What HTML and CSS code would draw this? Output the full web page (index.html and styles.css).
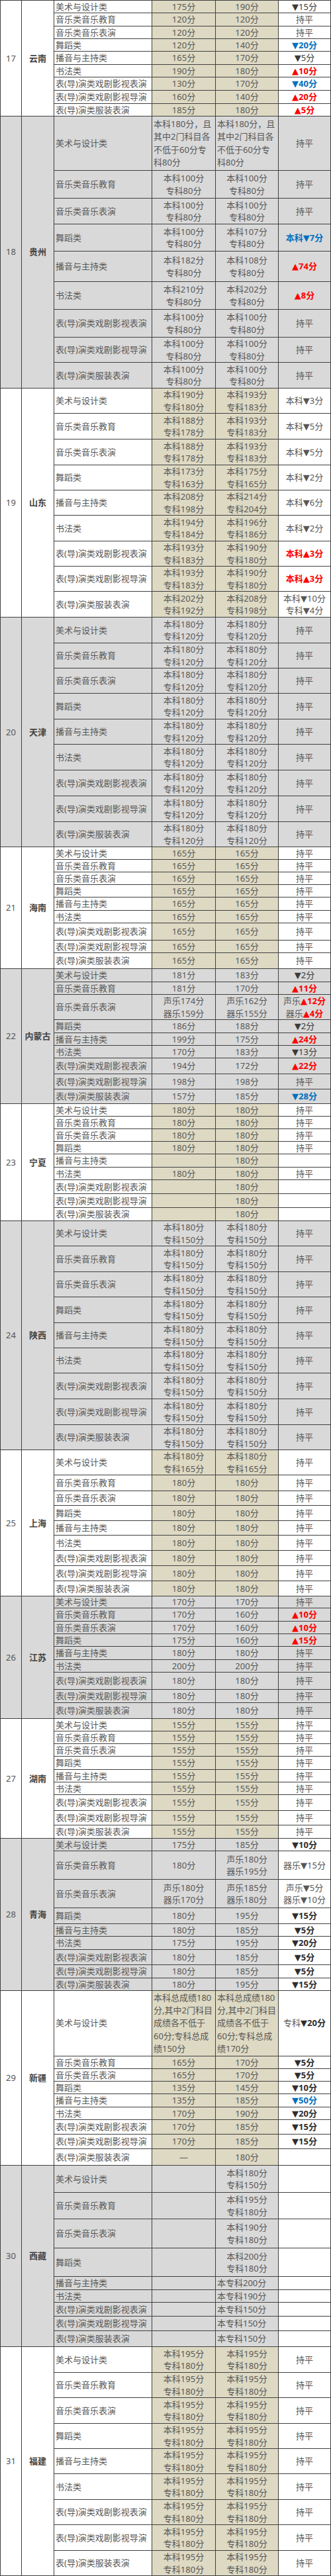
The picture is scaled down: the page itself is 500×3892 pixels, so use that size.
FILE: index.html
```html
<!DOCTYPE html>
<html lang="zh-CN">
<head>
<meta charset="utf-8">
<title>艺术类专业省控线对比</title>
<link rel="stylesheet" href="styles.css">
</head>
<body>
<table class="grid">
<colgroup><col class="w1"><col class="w2"><col class="w3"><col class="w4"><col class="w5"><col class="w6"></colgroup>

<tbody class="od">
<tr class="h19"><td rowspan="9" class="no">17</td><td rowspan="9" class="pv">云南</td><td class="n">美术与设计类</td><td class="s">175分</td><td class="s">190分</td><td class="c k">▼15分</td></tr>
<tr class="h20"><td class="n">音乐类音乐教育</td><td class="s">120分</td><td class="s">120分</td><td class="c">持平</td></tr>
<tr class="h19"><td class="n">音乐类音乐表演</td><td class="s">120分</td><td class="s">120分</td><td class="c">持平</td></tr>
<tr class="h19"><td class="n">舞蹈类</td><td class="s">120分</td><td class="s">140分</td><td class="c dn">▼20分</td></tr>
<tr class="h20"><td class="n">播音与主持类</td><td class="s">165分</td><td class="s">170分</td><td class="c k">▼5分</td></tr>
<tr class="h19"><td class="n">书法类</td><td class="s">190分</td><td class="s">180分</td><td class="c up">▲10分</td></tr>
<tr class="h20"><td class="n">表(导)演类戏剧影视表演</td><td class="s">130分</td><td class="s">170分</td><td class="c dn">▼40分</td></tr>
<tr class="h20"><td class="n">表(导)演类戏剧影视导演</td><td class="s">160分</td><td class="s">140分</td><td class="c up">▲20分</td></tr>
<tr class="h19"><td class="n">表(导)演类服装表演</td><td class="s">185分</td><td class="s">180分</td><td class="c up">▲5分</td></tr>
</tbody>

<tbody class="ev">
<tr class="h82 x4"><td rowspan="9" class="no">18</td><td rowspan="9" class="pv">贵州</td><td class="n">美术与设计类</td><td class="s l">本科180分，且<br>其中2门科目各<br>不低于60分专<br>科80分</td><td class="s l">本科180分，且<br>其中2门科目各<br>不低于60分专<br>科80分</td><td class="c">持平</td></tr>
<tr class="h42 x2"><td class="n">音乐类音乐教育</td><td class="s">本科100分<br>专科80分</td><td class="s">本科100分<br>专科80分</td><td class="c">持平</td></tr>
<tr class="h39 x2"><td class="n">音乐类音乐表演</td><td class="s">本科100分<br>专科80分</td><td class="s">本科100分<br>专科80分</td><td class="c">持平</td></tr>
<tr class="h41 x2"><td class="n">舞蹈类</td><td class="s">本科100分<br>专科80分</td><td class="s">本科107分<br>专科80分</td><td class="c dn">本科▼7分</td></tr>
<tr class="h46 x2"><td class="n">播音与主持类</td><td class="s">本科182分<br>专科80分</td><td class="s">本科108分<br>专科80分</td><td class="c up">▲74分</td></tr>
<tr class="h42 x2"><td class="n">书法类</td><td class="s">本科210分<br>专科80分</td><td class="s">本科202分<br>专科80分</td><td class="c up">▲8分</td></tr>
<tr class="h42 x2"><td class="n">表(导)演类戏剧影视表演</td><td class="s">本科100分<br>专科80分</td><td class="s">本科100分<br>专科80分</td><td class="c">持平</td></tr>
<tr class="h38 x2"><td class="n">表(导)演类戏剧影视导演</td><td class="s">本科100分<br>专科80分</td><td class="s">本科100分<br>专科80分</td><td class="c">持平</td></tr>
<tr class="h39 x2"><td class="n">表(导)演类服装表演</td><td class="s">本科100分<br>专科80分</td><td class="s">本科100分<br>专科80分</td><td class="c">持平</td></tr>
</tbody>

<tbody class="od">
<tr class="h38 x2"><td rowspan="9" class="no">19</td><td rowspan="9" class="pv">山东</td><td class="n">美术与设计类</td><td class="s">本科190分<br>专科180分</td><td class="s">本科193分<br>专科183分</td><td class="c">本科▼3分</td></tr>
<tr class="h39 x2"><td class="n">音乐类音乐教育</td><td class="s">本科188分<br>专科178分</td><td class="s">本科193分<br>专科183分</td><td class="c">本科▼5分</td></tr>
<tr class="h39 x2"><td class="n">音乐类音乐表演</td><td class="s">本科188分<br>专科178分</td><td class="s">本科193分<br>专科183分</td><td class="c">本科▼5分</td></tr>
<tr class="h38 x2"><td class="n">舞蹈类</td><td class="s">本科173分<br>专科163分</td><td class="s">本科175分<br>专科165分</td><td class="c">本科▼2分</td></tr>
<tr class="h38 x2"><td class="n">播音与主持类</td><td class="s">本科208分<br>专科198分</td><td class="s">本科214分<br>专科204分</td><td class="c">本科▼6分</td></tr>
<tr class="h39 x2"><td class="n">书法类</td><td class="s">本科194分<br>专科184分</td><td class="s">本科196分<br>专科186分</td><td class="c">本科▼2分</td></tr>
<tr class="h38 x2"><td class="n">表(导)演类戏剧影视表演</td><td class="s">本科193分<br>专科183分</td><td class="s">本科190分<br>专科180分</td><td class="c up">本科▲3分</td></tr>
<tr class="h38 x2"><td class="n">表(导)演类戏剧影视导演</td><td class="s">本科193分<br>专科183分</td><td class="s">本科190分<br>专科180分</td><td class="c up">本科▲3分</td></tr>
<tr class="h39 x2"><td class="n">表(导)演类服装表演</td><td class="s">本科202分<br>专科192分</td><td class="s">本科208分<br>专科198分</td><td class="c">本科▼10分<br>专科▼4分</td></tr>
</tbody>

<tbody class="ev">
<tr class="h39 x2"><td rowspan="9" class="no">20</td><td rowspan="9" class="pv">天津</td><td class="n">美术与设计类</td><td class="s">本科180分<br>专科120分</td><td class="s">本科180分<br>专科120分</td><td class="c">持平</td></tr>
<tr class="h38 x2"><td class="n">音乐类音乐教育</td><td class="s">本科180分<br>专科120分</td><td class="s">本科180分<br>专科120分</td><td class="c">持平</td></tr>
<tr class="h38 x2"><td class="n">音乐类音乐表演</td><td class="s">本科180分<br>专科120分</td><td class="s">本科180分<br>专科120分</td><td class="c">持平</td></tr>
<tr class="h39 x2"><td class="n">舞蹈类</td><td class="s">本科180分<br>专科120分</td><td class="s">本科180分<br>专科120分</td><td class="c">持平</td></tr>
<tr class="h38 x2"><td class="n">播音与主持类</td><td class="s">本科180分<br>专科120分</td><td class="s">本科180分<br>专科120分</td><td class="c">持平</td></tr>
<tr class="h39 x2"><td class="n">书法类</td><td class="s">本科180分<br>专科120分</td><td class="s">本科180分<br>专科120分</td><td class="c">持平</td></tr>
<tr class="h39 x2"><td class="n">表(导)演类戏剧影视表演</td><td class="s">本科180分<br>专科120分</td><td class="s">本科180分<br>专科120分</td><td class="c">持平</td></tr>
<tr class="h39 x2"><td class="n">表(导)演类戏剧影视导演</td><td class="s">本科180分<br>专科120分</td><td class="s">本科180分<br>专科120分</td><td class="c">持平</td></tr>
<tr class="h38 x2"><td class="n">表(导)演类服装表演</td><td class="s">本科180分<br>专科120分</td><td class="s">本科180分<br>专科120分</td><td class="c">持平</td></tr>
</tbody>

<tbody class="od">
<tr class="h19"><td rowspan="9" class="no">21</td><td rowspan="9" class="pv">海南</td><td class="n">美术与设计类</td><td class="s">165分</td><td class="s">165分</td><td class="c">持平</td></tr>
<tr class="h19"><td class="n">音乐类音乐教育</td><td class="s">165分</td><td class="s">165分</td><td class="c">持平</td></tr>
<tr class="h19"><td class="n">音乐类音乐表演</td><td class="s">165分</td><td class="s">165分</td><td class="c">持平</td></tr>
<tr class="h19"><td class="n">舞蹈类</td><td class="s">165分</td><td class="s">165分</td><td class="c">持平</td></tr>
<tr class="h20"><td class="n">播音与主持类</td><td class="s">165分</td><td class="s">165分</td><td class="c">持平</td></tr>
<tr class="h19"><td class="n">书法类</td><td class="s">165分</td><td class="s">165分</td><td class="c">持平</td></tr>
<tr class="h26"><td class="n">表(导)演类戏剧影视表演</td><td class="s">165分</td><td class="s">165分</td><td class="c">持平</td></tr>
<tr class="h19"><td class="n">表(导)演类戏剧影视导演</td><td class="s">165分</td><td class="s">165分</td><td class="c">持平</td></tr>
<tr class="h24"><td class="n">表(导)演类服装表演</td><td class="s">165分</td><td class="s">165分</td><td class="c">持平</td></tr>
</tbody>

<tbody class="ev">
<tr class="h20"><td rowspan="9" class="no">22</td><td rowspan="9" class="pv">内蒙古</td><td class="n">美术与设计类</td><td class="s">181分</td><td class="s">183分</td><td class="c k">▼2分</td></tr>
<tr class="h19"><td class="n">音乐类音乐教育</td><td class="s">181分</td><td class="s">170分</td><td class="c up">▲11分</td></tr>
<tr class="h38 x2"><td class="n">音乐类音乐表演</td><td class="s">声乐174分<br>器乐159分</td><td class="s">声乐162分<br>器乐155分</td><td class="c">声乐<span class="up">▲12分</span><br>器乐<span class="up">▲4分</span></td></tr>
<tr class="h20"><td class="n">舞蹈类</td><td class="s">186分</td><td class="s">188分</td><td class="c k">▼2分</td></tr>
<tr class="h19"><td class="n">播音与主持类</td><td class="s">199分</td><td class="s">175分</td><td class="c up">▲24分</td></tr>
<tr class="h19"><td class="n">书法类</td><td class="s">170分</td><td class="s">183分</td><td class="c k">▼13分</td></tr>
<tr class="h24"><td class="n">表(导)演类戏剧影视表演</td><td class="s">194分</td><td class="s">172分</td><td class="c up">▲22分</td></tr>
<tr class="h23"><td class="n">表(导)演类戏剧影视导演</td><td class="s">198分</td><td class="s">198分</td><td class="c">持平</td></tr>
<tr class="h22"><td class="n">表(导)演类服装表演</td><td class="s">157分</td><td class="s">185分</td><td class="c dn">▼28分</td></tr>
</tbody>

<tbody class="od">
<tr class="h19"><td rowspan="9" class="no">23</td><td rowspan="9" class="pv">宁夏</td><td class="n">美术与设计类</td><td class="s">180分</td><td class="s">180分</td><td class="c">持平</td></tr>
<tr class="h19"><td class="n">音乐类音乐教育</td><td class="s">180分</td><td class="s">180分</td><td class="c">持平</td></tr>
<tr class="h19"><td class="n">音乐类音乐表演</td><td class="s">180分</td><td class="s">180分</td><td class="c">持平</td></tr>
<tr class="h19"><td class="n">舞蹈类</td><td class="s">180分</td><td class="s">180分</td><td class="c">持平</td></tr>
<tr class="h20"><td class="n">播音与主持类</td><td class="s"></td><td class="s">180分</td><td class="c"></td></tr>
<tr class="h19"><td class="n">书法类</td><td class="s">180分</td><td class="s">180分</td><td class="c">持平</td></tr>
<tr class="h21"><td class="n">表(导)演类戏剧影视表演</td><td class="s"></td><td class="s">180分</td><td class="c"></td></tr>
<tr class="h21"><td class="n">表(导)演类戏剧影视导演</td><td class="s"></td><td class="s">180分</td><td class="c"></td></tr>
<tr class="h20"><td class="n">表(导)演类服装表演</td><td class="s"></td><td class="s">180分</td><td class="c"></td></tr>
</tbody>

<tbody class="ev">
<tr class="h38 x2"><td rowspan="9" class="no">24</td><td rowspan="9" class="pv">陕西</td><td class="n">美术与设计类</td><td class="s">本科180分<br>专科150分</td><td class="s">本科180分<br>专科150分</td><td class="c">持平</td></tr>
<tr class="h39 x2"><td class="n">音乐类音乐教育</td><td class="s">本科180分<br>专科150分</td><td class="s">本科180分<br>专科150分</td><td class="c">持平</td></tr>
<tr class="h38 x2"><td class="n">音乐类音乐表演</td><td class="s">本科180分<br>专科150分</td><td class="s">本科180分<br>专科150分</td><td class="c">持平</td></tr>
<tr class="h39 x2"><td class="n">舞蹈类</td><td class="s">本科180分<br>专科150分</td><td class="s">本科180分<br>专科150分</td><td class="c">持平</td></tr>
<tr class="h38 x2"><td class="n">播音与主持类</td><td class="s">本科180分<br>专科150分</td><td class="s">本科180分<br>专科150分</td><td class="c">持平</td></tr>
<tr class="h38 x2"><td class="n">书法类</td><td class="s">本科180分<br>专科150分</td><td class="s">本科180分<br>专科150分</td><td class="c">持平</td></tr>
<tr class="h39 x2"><td class="n">表(导)演类戏剧影视表演</td><td class="s">本科180分<br>专科150分</td><td class="s">本科180分<br>专科150分</td><td class="c">持平</td></tr>
<tr class="h39 x2"><td class="n">表(导)演类戏剧影视导演</td><td class="s">本科180分<br>专科150分</td><td class="s">本科180分<br>专科150分</td><td class="c">持平</td></tr>
<tr class="h38 x2"><td class="n">表(导)演类服装表演</td><td class="s">本科180分<br>专科150分</td><td class="s">本科180分<br>专科150分</td><td class="c">持平</td></tr>
</tbody>

<tbody class="od">
<tr class="h38 x2"><td rowspan="9" class="no">25</td><td rowspan="9" class="pv">上海</td><td class="n">美术与设计类</td><td class="s">本科180分<br>专科165分</td><td class="s">本科180分<br>专科165分</td><td class="c">持平</td></tr>
<tr class="h24"><td class="n">音乐类音乐教育</td><td class="s">180分</td><td class="s">180分</td><td class="c">持平</td></tr>
<tr class="h22"><td class="n">音乐类音乐表演</td><td class="s">180分</td><td class="s">180分</td><td class="c">持平</td></tr>
<tr class="h23"><td class="n">舞蹈类</td><td class="s">180分</td><td class="s">180分</td><td class="c">持平</td></tr>
<tr class="h22"><td class="n">播音与主持类</td><td class="s">180分</td><td class="s">180分</td><td class="c">持平</td></tr>
<tr class="h23"><td class="n">书法类</td><td class="s">180分</td><td class="s">180分</td><td class="c">持平</td></tr>
<tr class="h23"><td class="n">表(导)演类戏剧影视表演</td><td class="s">180分</td><td class="s">180分</td><td class="c">持平</td></tr>
<tr class="h23"><td class="n">表(导)演类戏剧影视导演</td><td class="s">180分</td><td class="s">180分</td><td class="c">持平</td></tr>
<tr class="h23"><td class="n">表(导)演类服装表演</td><td class="s">180分</td><td class="s">180分</td><td class="c">持平</td></tr>
</tbody>

<tbody class="ev">
<tr class="h18"><td rowspan="9" class="no">26</td><td rowspan="9" class="pv">江苏</td><td class="n">美术与设计类</td><td class="s">170分</td><td class="s">170分</td><td class="c">持平</td></tr>
<tr class="h20"><td class="n">音乐类音乐教育</td><td class="s">170分</td><td class="s">160分</td><td class="c up">▲10分</td></tr>
<tr class="h19"><td class="n">音乐类音乐表演</td><td class="s">170分</td><td class="s">160分</td><td class="c up">▲10分</td></tr>
<tr class="h19"><td class="n">舞蹈类</td><td class="s">175分</td><td class="s">160分</td><td class="c up">▲15分</td></tr>
<tr class="h20"><td class="n">播音与主持类</td><td class="s">180分</td><td class="s">180分</td><td class="c">持平</td></tr>
<tr class="h19"><td class="n">书法类</td><td class="s">200分</td><td class="s">200分</td><td class="c">持平</td></tr>
<tr class="h26"><td class="n">表(导)演类戏剧影视表演</td><td class="s">180分</td><td class="s">180分</td><td class="c">持平</td></tr>
<tr class="h20"><td class="n">表(导)演类戏剧影视导演</td><td class="s">180分</td><td class="s">180分</td><td class="c">持平</td></tr>
<tr class="h24"><td class="n">表(导)演类服装表演</td><td class="s">180分</td><td class="s">180分</td><td class="c">持平</td></tr>
</tbody>

<tbody class="od">
<tr class="h19"><td rowspan="9" class="no">27</td><td rowspan="9" class="pv">湖南</td><td class="n">美术与设计类</td><td class="s">155分</td><td class="s">155分</td><td class="c">持平</td></tr>
<tr class="h19"><td class="n">音乐类音乐教育</td><td class="s">155分</td><td class="s">155分</td><td class="c">持平</td></tr>
<tr class="h19"><td class="n">音乐类音乐表演</td><td class="s">155分</td><td class="s">155分</td><td class="c">持平</td></tr>
<tr class="h20"><td class="n">舞蹈类</td><td class="s">155分</td><td class="s">155分</td><td class="c">持平</td></tr>
<tr class="h19"><td class="n">播音与主持类</td><td class="s">155分</td><td class="s">155分</td><td class="c">持平</td></tr>
<tr class="h19"><td class="n">书法类</td><td class="s">155分</td><td class="s">155分</td><td class="c">持平</td></tr>
<tr class="h24"><td class="n">表(导)演类戏剧影视表演</td><td class="s">155分</td><td class="s">155分</td><td class="c">持平</td></tr>
<tr class="h22"><td class="n">表(导)演类戏剧影视导演</td><td class="s">155分</td><td class="s">155分</td><td class="c">持平</td></tr>
<tr class="h20"><td class="n">表(导)演类服装表演</td><td class="s">155分</td><td class="s">155分</td><td class="c">持平</td></tr>
</tbody>

<tbody class="ev wc">
<tr class="h19"><td rowspan="9" class="no">28</td><td rowspan="9" class="pv">青海</td><td class="n">美术与设计类</td><td class="s">175分</td><td class="s">185分</td><td class="c bk">▼10分</td></tr>
<tr class="h43 x2"><td class="n">音乐类音乐教育</td><td class="s">180分</td><td class="s">声乐180分<br>器乐195分</td><td class="c">器乐▼15分</td></tr>
<tr class="h43 x2"><td class="n">音乐类音乐表演</td><td class="s">声乐180分<br>器乐170分</td><td class="s">声乐185分<br>器乐180分</td><td class="c">声乐▼5分<br>器乐▼10分</td></tr>
<tr class="h24"><td class="n">舞蹈类</td><td class="s">180分</td><td class="s">195分</td><td class="c bk">▼15分</td></tr>
<tr class="h19"><td class="n">播音与主持类</td><td class="s">180分</td><td class="s">185分</td><td class="c bk">▼5分</td></tr>
<tr class="h20"><td class="n">书法类</td><td class="s">175分</td><td class="s">195分</td><td class="c bk">▼20分</td></tr>
<tr class="h23"><td class="n">表(导)演类戏剧影视表演</td><td class="s">180分</td><td class="s">185分</td><td class="c bk">▼5分</td></tr>
<tr class="h20"><td class="n">表(导)演类戏剧影视导演</td><td class="s">180分</td><td class="s">185分</td><td class="c bk">▼5分</td></tr>
<tr class="h19"><td class="n">表(导)演类服装表演</td><td class="s">180分</td><td class="s">195分</td><td class="c bk">▼15分</td></tr>
</tbody>

<tbody class="od">
<tr class="h99 x4"><td rowspan="9" class="no">29</td><td rowspan="9" class="pv">新疆</td><td class="n">美术与设计类</td><td class="s l">本科总成绩180<br>分,其中2门科目<br>成绩各不低于<br>60分;专科总成<br>绩150分</td><td class="s l">本科总成绩180<br>分,其中2门科目<br>成绩各不低于<br>60分;专科总成<br>绩170分</td><td class="c">专科<span class="bk">▼20分</span></td></tr>
<tr class="h19"><td class="n">音乐类音乐教育</td><td class="s">165分</td><td class="s">170分</td><td class="c bk">▼5分</td></tr>
<tr class="h19"><td class="n">音乐类音乐表演</td><td class="s">165分</td><td class="s">170分</td><td class="c bk">▼5分</td></tr>
<tr class="h19"><td class="n">舞蹈类</td><td class="s">135分</td><td class="s">145分</td><td class="c bk">▼10分</td></tr>
<tr class="h20"><td class="n">播音与主持类</td><td class="s">135分</td><td class="s">185分</td><td class="c dn">▼50分</td></tr>
<tr class="h19"><td class="n">书法类</td><td class="s">170分</td><td class="s">190分</td><td class="c bk">▼20分</td></tr>
<tr class="h22"><td class="n">表(导)演类戏剧影视表演</td><td class="s">170分</td><td class="s">185分</td><td class="c bk">▼15分</td></tr>
<tr class="h22"><td class="n">表(导)演类戏剧影视导演</td><td class="s">170分</td><td class="s">185分</td><td class="c bk">▼15分</td></tr>
<tr class="h25"><td class="n">表(导)演类服装表演</td><td class="s">—</td><td class="s">180分</td><td class="c"></td></tr>
</tbody>

<tbody class="ev wc">
<tr class="h41 x2"><td rowspan="9" class="no">30</td><td rowspan="9" class="pv">西藏</td><td class="n">美术与设计类</td><td class="s"></td><td class="s">本科180分<br>专科150分</td><td class="c"></td></tr>
<tr class="h40 x2"><td class="n">音乐类音乐教育</td><td class="s"></td><td class="s">本科195分<br>专科180分</td><td class="c"></td></tr>
<tr class="h44 x2"><td class="n">音乐类音乐表演</td><td class="s"></td><td class="s">本科190分<br>专科180分</td><td class="c"></td></tr>
<tr class="h43 x2"><td class="n">舞蹈类</td><td class="s"></td><td class="s">本科200分<br>专科180分</td><td class="c"></td></tr>
<tr class="h20"><td class="n">播音与主持类</td><td class="s"></td><td class="s l">本专科200分</td><td class="c"></td></tr>
<tr class="h19"><td class="n">书法类</td><td class="s"></td><td class="s l">本专科190分</td><td class="c"></td></tr>
<tr class="h21"><td class="n">表(导)演类戏剧影视表演</td><td class="s"></td><td class="s l">本专科150分</td><td class="c"></td></tr>
<tr class="h22"><td class="n">表(导)演类戏剧影视导演</td><td class="s"></td><td class="s l">本专科150分</td><td class="c"></td></tr>
<tr class="h24"><td class="n">表(导)演类服装表演</td><td class="s"></td><td class="s l">本专科150分</td><td class="c"></td></tr>
</tbody>

<tbody class="od">
<tr class="h39 x2"><td rowspan="9" class="no">31</td><td rowspan="9" class="pv">福建</td><td class="n">美术与设计类</td><td class="s">本科195分<br>专科180分</td><td class="s">本科195分<br>专科180分</td><td class="c">持平</td></tr>
<tr class="h38 x2"><td class="n">音乐类音乐教育</td><td class="s">本科195分<br>专科180分</td><td class="s">本科195分<br>专科180分</td><td class="c">持平</td></tr>
<tr class="h39 x2"><td class="n">音乐类音乐表演</td><td class="s">本科195分<br>专科180分</td><td class="s">本科195分<br>专科180分</td><td class="c">持平</td></tr>
<tr class="h38 x2"><td class="n">舞蹈类</td><td class="s">本科195分<br>专科180分</td><td class="s">本科195分<br>专科180分</td><td class="c">持平</td></tr>
<tr class="h38 x2"><td class="n">播音与主持类</td><td class="s">本科195分<br>专科180分</td><td class="s">本科195分<br>专科180分</td><td class="c">持平</td></tr>
<tr class="h39 x2"><td class="n">书法类</td><td class="s">本科195分<br>专科180分</td><td class="s">本科195分<br>专科180分</td><td class="c">持平</td></tr>
<tr class="h38 x2"><td class="n">表(导)演类戏剧影视表演</td><td class="s">本科195分<br>专科180分</td><td class="s">本科195分<br>专科180分</td><td class="c">持平</td></tr>
<tr class="h39 x2"><td class="n">表(导)演类戏剧影视导演</td><td class="s">本科195分<br>专科180分</td><td class="s">本科195分<br>专科180分</td><td class="c">持平</td></tr>
<tr class="h38 x2"><td class="n">表(导)演类服装表演</td><td class="s">本科195分<br>专科180分</td><td class="s">本科195分<br>专科180分</td><td class="c">持平</td></tr>
</tbody>
</table>
</body>
</html>
```

FILE: styles.css
```css
html, body {
  margin: 0;
  padding: 0;
  background: #ffffff;
}

.grid {
  width: 500px;
  table-layout: fixed;
  border-collapse: separate;
  border-spacing: 0;
  border-top: 1px solid #404040;
  border-left: 1px solid #404040;
  font-family: "Noto Sans", "DejaVu Sans", "Noto Sans CJK SC", sans-serif;
  font-size: 13px;
  line-height: 17px;
  color: #575757;
}

.w1 { width: 32px; }
.w2 { width: 49px; }
.w3 { width: 148px; }
.w4 { width: 96px; }
.w5 { width: 95px; }
.w6 { width: 79px; }

.grid td {
  box-sizing: border-box;
  padding: 0 2px;
  border-right: 1px solid #404040;
  border-bottom: 1px solid #404040;
  vertical-align: middle;
  text-align: center;
  white-space: nowrap;
  overflow: hidden;
  background: #ffffff;
}

.grid td.n { text-align: left; }
.grid td.l { text-align: left; }

.x2 td { line-height: 18.5px; }
.x4 td { line-height: 19.3px; }

.no { color: #555555; }
.pv { font-weight: bold; color: #444444; }

.od td.s { background: #ddd9c3; }
.ev td { background: #d9d9d9; }
.ev.wc td.c { background: #ffffff; }

.k { color: #3a3a3a; }
.bk { color: #2e2e2e; font-weight: bold; }
.up { color: #ff0000; font-weight: bold; }
.dn { color: #0070c0; font-weight: bold; }

.h18 { height: 18px; }
.h19 { height: 19px; }
.h20 { height: 20px; }
.h21 { height: 21px; }
.h22 { height: 22px; }
.h23 { height: 23px; }
.h24 { height: 24px; }
.h25 { height: 25px; }
.h26 { height: 26px; }
.h38 { height: 38px; }
.h39 { height: 39px; }
.h40 { height: 40px; }
.h41 { height: 41px; }
.h42 { height: 42px; }
.h43 { height: 43px; }
.h44 { height: 44px; }
.h46 { height: 46px; }
.h82 { height: 82px; }
.h99 { height: 99px; }
```
